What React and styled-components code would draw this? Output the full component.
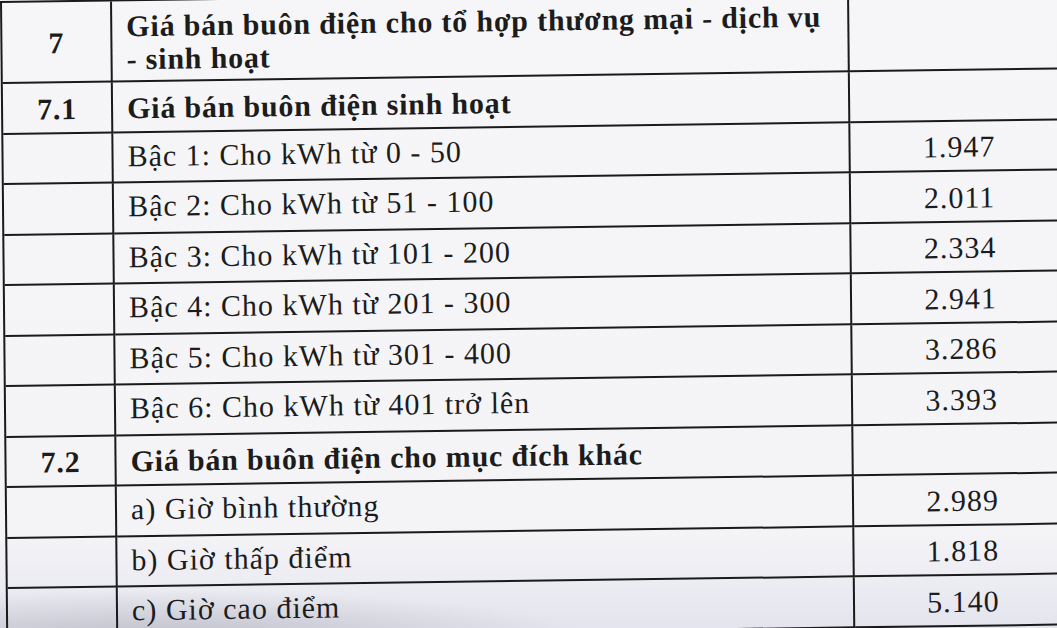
import React from "react";
import styled, { createGlobalStyle } from "styled-components";

const Global = createGlobalStyle`
  html, body {
    margin: 0;
    padding: 0;
    width: 1057px;
    height: 628px;
    overflow: hidden;
  }
  body {
    background:
      radial-gradient(ellipse 430px 50px at 160px 640px, rgba(165,165,178,0.6), rgba(165,165,178,0) 100%),
      linear-gradient(to bottom, #f6f6f8 0%, #f4f4f7 85%, #e4e4ee 100%);
    font-family: "Liberation Serif", "Times New Roman", serif;
    color: #1c1c1c;
  }
`;

const Page = styled.div`
  width: 1057px;
  height: 628px;
  overflow: hidden;
  position: relative;
`;

/* the scanned sheet is slightly skewed */
const Sheet = styled.div`
  display: flex;
  flex-direction: column;
  width: 1068px;
  border-top: 2px solid #1a1a1a;
  border-left: 2px solid #1a1a1a;
  box-sizing: border-box;
  margin-top: 1px;
  transform-origin: 0 0;
  transform: matrix(1, -0.0137, 0.0098, 1, 0, 0);
`;

const Row = styled.div`
  display: grid;
  grid-template-columns: 110px 737px 219px;
  height: ${(p) => (p.$tall ? "81px" : "50.5px")};
`;

const Cell = styled.div`
  box-sizing: border-box;
  border-right: 2px solid #1a1a1a;
  border-bottom: 2px solid #1a1a1a;
  display: flex;
  align-items: center;
  justify-content: ${(p) => (p.$align === "left" ? "flex-start" : "center")};
  padding-left: ${(p) => (p.$align === "left" ? "14px" : "0")};
  padding-top: ${(p) => (p.$lift ? "0" : "2px")};
  padding-bottom: ${(p) => (p.$lift ? "3px" : "0")};
  font-size: 30px;
  font-weight: ${(p) => (p.$bold ? 700 : 400)};
  letter-spacing: ${(p) => (p.$bold ? "0.8px" : "1px")};
  line-height: 33px;
  white-space: pre-line;
`;

const NumCell = styled(Cell)`
  padding-left: 0;
`;

const rows = [
  { no: "7", text: "Giá bán buôn điện cho tổ hợp thương mại - dịch vụ\n- sinh hoạt", bold: true, tall: true, val: "" },
  { no: "7.1", text: "Giá bán buôn điện sinh hoạt", bold: true, val: "" },
  { no: "", text: "Bậc 1: Cho kWh từ 0 - 50", val: "1.947" },
  { no: "", text: "Bậc 2: Cho kWh từ 51 - 100", val: "2.011" },
  { no: "", text: "Bậc 3: Cho kWh từ 101 - 200", val: "2.334" },
  { no: "", text: "Bậc 4: Cho kWh từ 201 - 300", val: "2.941" },
  { no: "", text: "Bậc 5: Cho kWh từ 301 - 400", val: "3.286" },
  { no: "", text: "Bậc 6: Cho kWh từ 401 trở lên", val: "3.393" },
  { no: "7.2", text: "Giá bán buôn điện cho mục đích khác", bold: true, val: "" },
  { no: "", text: "a) Giờ bình thường", val: "2.989" },
  { no: "", text: "b) Giờ thấp điểm", val: "1.818" },
  { no: "", text: "c) Giờ cao điểm", val: "5.140" },
  { no: "", text: "", val: "" },
];

export default function App() {
  return (
    <>
      <Global />
      <Page>
        <Sheet>
          {rows.map((r, i) => (
            <Row key={i} $tall={r.tall}>
              <Cell $bold>{r.no}</Cell>
              <Cell $align="left" $bold={r.bold} $lift={!r.bold}>{r.text}</Cell>
              <NumCell>{r.val}</NumCell>
            </Row>
          ))}
        </Sheet>
      </Page>
    </>
  );
}
